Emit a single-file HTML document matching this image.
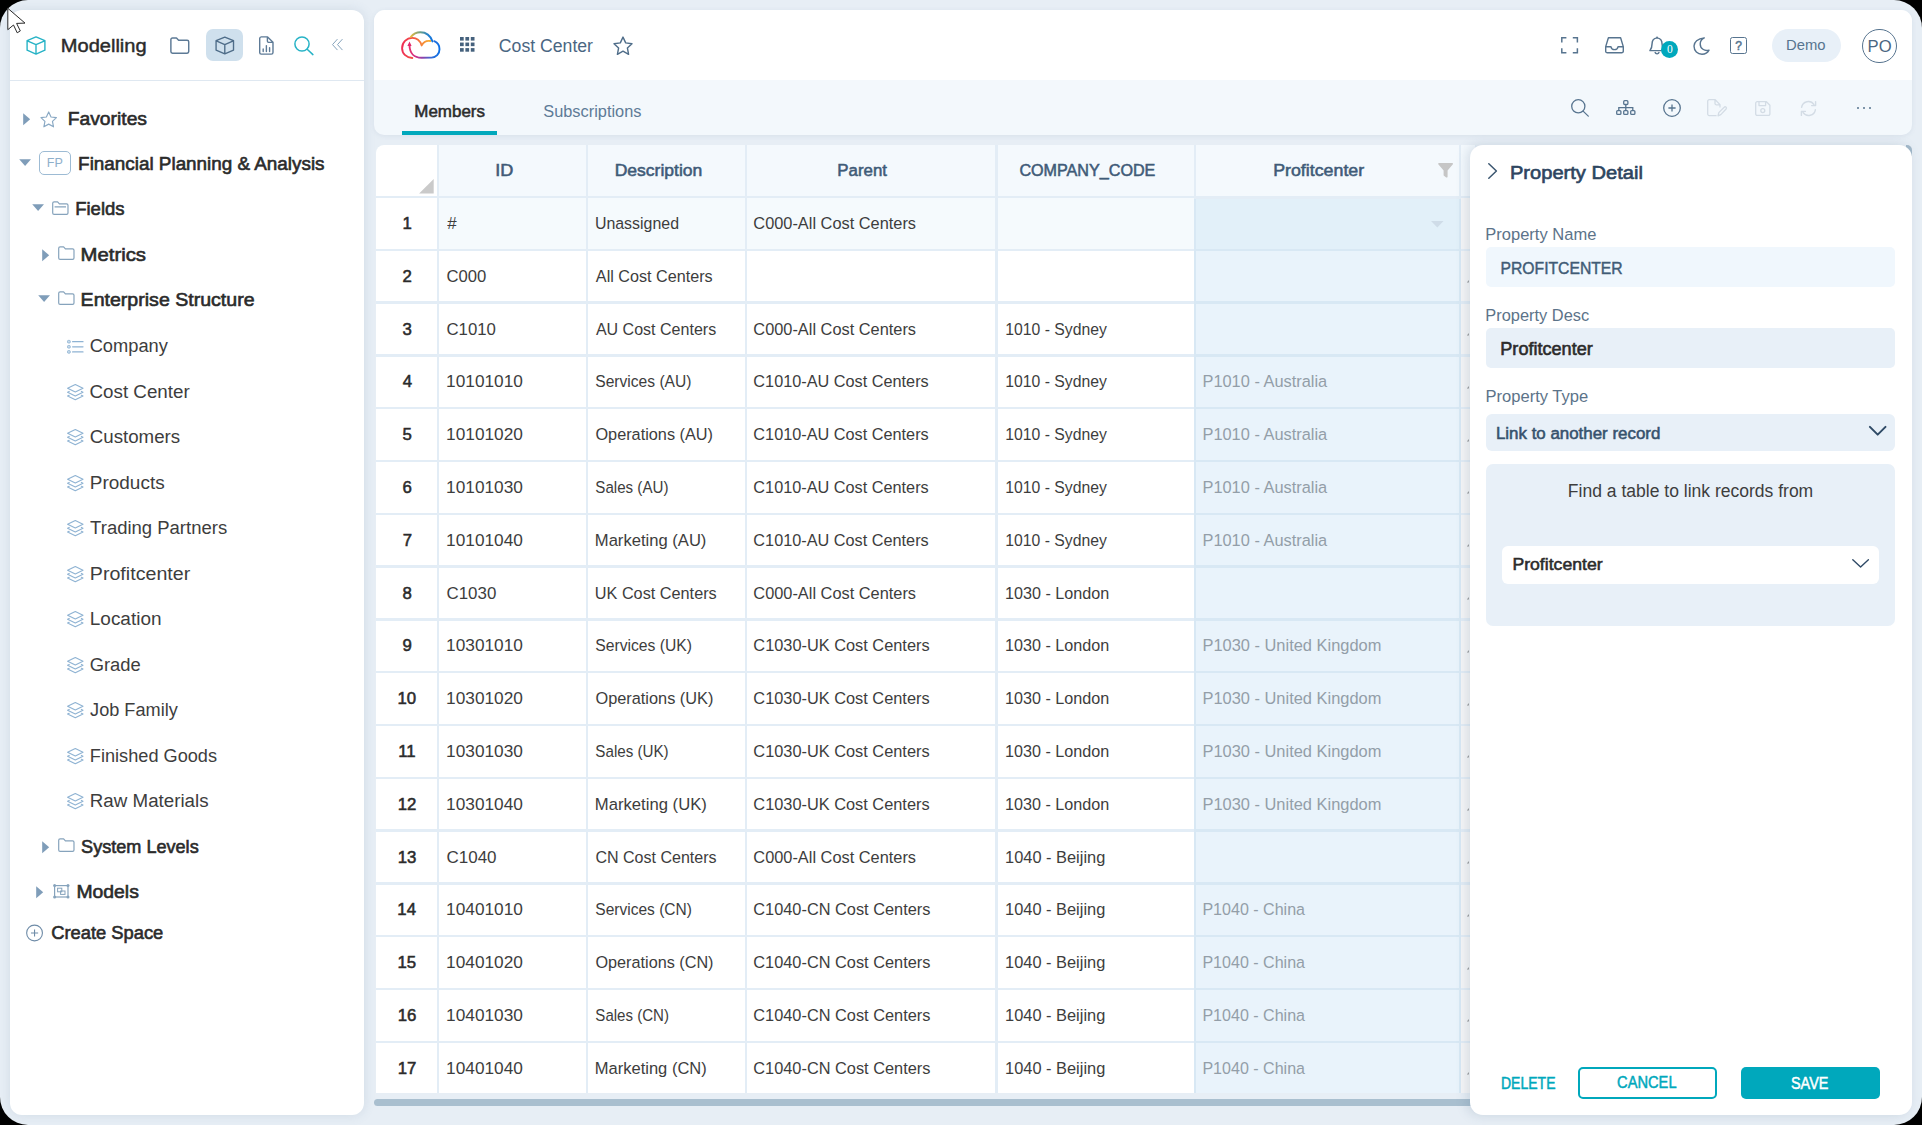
<!DOCTYPE html>
<html lang="en"><head><meta charset="utf-8"><title>Cost Center - Modelling</title>
<style>
html,body{margin:0;padding:0;}
body{width:1922px;height:1125px;overflow:hidden;background:#000;font-family:"Liberation Sans", sans-serif;position:relative;}
.b{position:absolute;box-sizing:border-box;}
.t{position:absolute;white-space:nowrap;line-height:24px;height:24px;transform-origin:0 50%;}
svg{overflow:visible;}
</style></head><body>
<div class="b" style="left:0;top:0;width:1922px;height:1125px;border-radius:28px;background:#e7eef5;overflow:hidden;">
<nav aria-label="Modelling"><div class="b" style="left:10px;top:10px;width:354px;height:1105px;background:#fff;border-radius:12px;box-shadow:0 0 12px rgba(90,120,150,.16);"></div>
<div class="b" style="left:10px;top:80px;width:354px;height:1px;background:#dfe8f1;"></div>
<svg class="b" style="left:26px;top:35.8px;" width="20" height="19" viewBox="0 0 20 19" fill="none"><path d="M10 .9 18.9 4.6V14.2L10 18.1 1.1 14.2V4.6Z M1.3 4.8 10 8.6 18.7 4.8 M10 8.6V18" stroke="#27b3c6" stroke-width="1.4" stroke-linejoin="round" stroke-linecap="round"/></svg>
<span class="t" id="t0" style="left:60px;padding-left:0.73px;top:33.87px;font-size:19.2px;font-weight:400;color:#2b2b2b;transform:scaleX(1.0460);-webkit-text-stroke:0.45px #2b2b2b;">Modelling</span>
<svg class="b" style="left:170.3px;top:36.6px;" width="19.6" height="17.2" viewBox="0 0 20 17.5" fill="none"><path d="M.9 2.6A1.6 1.6 0 0 1 2.5 1H6.6L8.8 3.3H17.5A1.6 1.6 0 0 1 19.1 4.9V14.9A1.6 1.6 0 0 1 17.5 16.5H2.5A1.6 1.6 0 0 1 .9 14.9Z" stroke="#5d7a96" stroke-width="1.5" stroke-linejoin="round"/></svg>
<div class="b" style="left:206px;top:29px;width:37px;height:32px;background:#cfe0ed;border-radius:7px;"></div>
<svg class="b" style="left:214.6px;top:35.7px;" width="19.6" height="19" viewBox="0 0 20 19" fill="none"><path d="M10 .9 18.9 4.6V14.2L10 18.1 1.1 14.2V4.6Z M1.3 4.8 10 8.6 18.7 4.8 M10 8.6V18" stroke="#4f6d89" stroke-width="1.4" stroke-linejoin="round" stroke-linecap="round"/></svg>
<svg class="b" style="left:258.7px;top:36px;" width="14.7" height="19" viewBox="0 0 14.7 19" fill="none"><path d="M2.3 .9H8.6L14 6.3V16.4A1.7 1.7 0 0 1 12.3 18.1H2.3A1.7 1.7 0 0 1 .7 16.4V2.6A1.7 1.7 0 0 1 2.3 .9Z M8.4 1.1V4.9A1.5 1.5 0 0 0 9.9 6.4H13.8" stroke="#5d7a96" stroke-width="1.4" stroke-linejoin="round"/><path d="M4.2 13V15.6 M7.4 9.6V15.6 M10.6 11.6V15.6" stroke="#5d7a96" stroke-width="1.4" stroke-linecap="round"/></svg>
<svg class="b" style="left:294.4px;top:36.1px;" width="19.6" height="19" viewBox="0 0 19.6 19" fill="none"><circle cx="8" cy="8" r="7.1" stroke="#27b3c6" stroke-width="1.5"/><path d="M13.2 13.2 18.9 18.6" stroke="#27b3c6" stroke-width="1.5" stroke-linecap="round"/></svg>
<svg class="b" style="left:331.8px;top:38.9px;" width="10.6" height="11.2" viewBox="0 0 10.6 11.2" fill="none"><path d="M5.2 .4 .5 5.6 5.2 10.8 M10.2 .4 5.5 5.6 10.2 10.8" stroke="#86a3bc" stroke-width="1" stroke-linecap="round" stroke-linejoin="round"/></svg>
<svg class="b" style="left:22.8px;top:113.19999999999999px;" width="7.4" height="12.4" viewBox="0 0 7.4 12.4" fill="none"><path d="M.2 .2 7.2 6.2 .2 12.2Z" fill="#7f9db9"/></svg>
<svg class="b" style="left:39.9px;top:110.5px;" width="17.4" height="16.8" viewBox="0 0 18 17.4" fill="none"><path d="M9 1 11.4 6.2 17 6.9 12.9 10.8 14 16.4 9 13.6 4 16.4 5.1 10.8 1 6.9 6.6 6.2Z" stroke="#8aa9c4" stroke-width="1.2" stroke-linejoin="round"/></svg>
<span class="t" id="t1" style="left:67px;padding-left:0.73px;top:107.00px;font-size:19.2px;font-weight:400;color:#2b2b2b;transform:scaleX(1.0049);-webkit-text-stroke:0.63px #2b2b2b;">Favorites</span>
<svg class="b" style="left:19.4px;top:159.4px;" width="12.2" height="7.2" viewBox="0 0 12.2 7.2" fill="none"><path d="M.2 .2H12L6.1 7Z" fill="#7f9db9"/></svg>
<div class="b" style="left:39px;top:150.5px;width:32px;height:24.8px;background:#fff;border:1.2px solid #9dbbd4;border-radius:5px;"></div>
<span class="t" id="t2" style="left:46px;padding-left:0.88px;top:151.08px;font-size:12.8px;font-weight:400;color:#8fb0cb;transform:scaleX(0.9819);">FP</span>
<span class="t" id="t3" style="left:78px;padding-left:0.13px;top:152.00px;font-size:19.2px;font-weight:400;color:#2b2b2b;transform:scaleX(0.9831);-webkit-text-stroke:0.63px #2b2b2b;">Financial Planning &amp; Analysis</span>
<svg class="b" style="left:31.8px;top:203.9px;" width="12.2" height="7.2" viewBox="0 0 12.2 7.2" fill="none"><path d="M.2 .2H12L6.1 7Z" fill="#7f9db9"/></svg>
<svg class="b" style="left:51.8px;top:200.5px;" width="16.7" height="14.2" viewBox="0 0 16.7 14.2" fill="none"><path d="M.7 2.2A1.4 1.4 0 0 1 2.1.8H5.6L7.4 2.9H14.6A1.4 1.4 0 0 1 16 4.3V12A1.4 1.4 0 0 1 14.6 13.4H2.1A1.4 1.4 0 0 1 .7 12Z" stroke="#86a3bc" stroke-width="1.2" stroke-linejoin="round"/><path d="M2.6 5.9H14" stroke="#86a3bc" stroke-width="1.1"/></svg>
<span class="t" id="t4" style="left:75px;padding-left:0.19px;top:197.00px;font-size:19.2px;font-weight:400;color:#2b2b2b;transform:scaleX(0.9640);-webkit-text-stroke:0.63px #2b2b2b;">Fields</span>
<svg class="b" style="left:41.8px;top:249.2px;" width="7.4" height="12.4" viewBox="0 0 7.4 12.4" fill="none"><path d="M.2 .2 7.2 6.2 .2 12.2Z" fill="#7f9db9"/></svg>
<svg class="b" style="left:57.7px;top:245.5px;" width="16.7" height="14.2" viewBox="0 0 16.7 14.2" fill="none"><path d="M.7 2.2A1.4 1.4 0 0 1 2.1.8H5.6L7.4 2.9H14.6A1.4 1.4 0 0 1 16 4.3V12A1.4 1.4 0 0 1 14.6 13.4H2.1A1.4 1.4 0 0 1 .7 12Z" stroke="#86a3bc" stroke-width="1.2" stroke-linejoin="round"/></svg>
<span class="t" id="t5" style="left:80px;padding-left:0.59px;top:243.00px;font-size:19.2px;font-weight:400;color:#2b2b2b;transform:scaleX(1.0577);-webkit-text-stroke:0.63px #2b2b2b;">Metrics</span>
<svg class="b" style="left:37.8px;top:295.1px;" width="12.2" height="7.2" viewBox="0 0 12.2 7.2" fill="none"><path d="M.2 .2H12L6.1 7Z" fill="#7f9db9"/></svg>
<svg class="b" style="left:57.7px;top:290.5px;" width="16.7" height="14.2" viewBox="0 0 16.7 14.2" fill="none"><path d="M.7 2.2A1.4 1.4 0 0 1 2.1.8H5.6L7.4 2.9H14.6A1.4 1.4 0 0 1 16 4.3V12A1.4 1.4 0 0 1 14.6 13.4H2.1A1.4 1.4 0 0 1 .7 12Z" stroke="#86a3bc" stroke-width="1.2" stroke-linejoin="round"/></svg>
<span class="t" id="t6" style="left:80px;padding-left:0.62px;top:288.00px;font-size:19.2px;font-weight:400;color:#2b2b2b;transform:scaleX(1.0193);-webkit-text-stroke:0.63px #2b2b2b;">Enterprise Structure</span>
<svg class="b" style="left:67px;top:339.5px;" width="16.6" height="13.6" viewBox="0 0 16.6 13.6" fill="none"><rect x=".5" y="0.3999999999999999" width="2.8" height="2.6" rx=".9" fill="#c9dcec" stroke="#8fb3d3" stroke-width=".9"/><path d="M5.6 1.7H16" stroke="#8fb3d3" stroke-width="1.25" stroke-linecap="round"/><rect x=".5" y="5.5" width="2.8" height="2.6" rx=".9" fill="#c9dcec" stroke="#8fb3d3" stroke-width=".9"/><path d="M5.6 6.8H16" stroke="#8fb3d3" stroke-width="1.25" stroke-linecap="round"/><rect x=".5" y="10.6" width="2.8" height="2.6" rx=".9" fill="#c9dcec" stroke="#8fb3d3" stroke-width=".9"/><path d="M5.6 11.9H16" stroke="#8fb3d3" stroke-width="1.25" stroke-linecap="round"/></svg>
<span class="t" id="t7" style="left:89px;padding-left:0.69px;top:334.00px;font-size:19.2px;font-weight:400;color:#3d3d3d;transform:scaleX(0.9520);">Company</span>
<svg class="b" style="left:66.8px;top:383.6px;" width="16.6" height="16.4" viewBox="0 0 16.6 16.4" fill="none"><path d="M8.3 .6 16 4.3 8.3 8 .6 4.3Z" stroke="#8fb3d3" stroke-width="1.15" stroke-linejoin="round"/><path d="M2.2 7.4 .6 8.2 8.3 11.9 16 8.2 14.4 7.4 M2.2 11.3 .6 12.1 8.3 15.8 16 12.1 14.4 11.3" stroke="#8fb3d3" stroke-width="1.15" stroke-linejoin="round" stroke-linecap="round"/></svg>
<span class="t" id="t8" style="left:89px;padding-left:0.59px;top:380.00px;font-size:19.2px;font-weight:400;color:#3d3d3d;transform:scaleX(0.9781);">Cost Center</span>
<svg class="b" style="left:66.8px;top:428.6px;" width="16.6" height="16.4" viewBox="0 0 16.6 16.4" fill="none"><path d="M8.3 .6 16 4.3 8.3 8 .6 4.3Z" stroke="#8fb3d3" stroke-width="1.15" stroke-linejoin="round"/><path d="M2.2 7.4 .6 8.2 8.3 11.9 16 8.2 14.4 7.4 M2.2 11.3 .6 12.1 8.3 15.8 16 12.1 14.4 11.3" stroke="#8fb3d3" stroke-width="1.15" stroke-linejoin="round" stroke-linecap="round"/></svg>
<span class="t" id="t9" style="left:89px;padding-left:0.78px;top:425.00px;font-size:19.2px;font-weight:400;color:#3d3d3d;transform:scaleX(0.9746);">Customers</span>
<svg class="b" style="left:66.8px;top:474.6px;" width="16.6" height="16.4" viewBox="0 0 16.6 16.4" fill="none"><path d="M8.3 .6 16 4.3 8.3 8 .6 4.3Z" stroke="#8fb3d3" stroke-width="1.15" stroke-linejoin="round"/><path d="M2.2 7.4 .6 8.2 8.3 11.9 16 8.2 14.4 7.4 M2.2 11.3 .6 12.1 8.3 15.8 16 12.1 14.4 11.3" stroke="#8fb3d3" stroke-width="1.15" stroke-linejoin="round" stroke-linecap="round"/></svg>
<span class="t" id="t10" style="left:89px;padding-left:0.80px;top:471.00px;font-size:19.2px;font-weight:400;color:#3d3d3d;transform:scaleX(0.9886);">Products</span>
<svg class="b" style="left:66.8px;top:519.6px;" width="16.6" height="16.4" viewBox="0 0 16.6 16.4" fill="none"><path d="M8.3 .6 16 4.3 8.3 8 .6 4.3Z" stroke="#8fb3d3" stroke-width="1.15" stroke-linejoin="round"/><path d="M2.2 7.4 .6 8.2 8.3 11.9 16 8.2 14.4 7.4 M2.2 11.3 .6 12.1 8.3 15.8 16 12.1 14.4 11.3" stroke="#8fb3d3" stroke-width="1.15" stroke-linejoin="round" stroke-linecap="round"/></svg>
<span class="t" id="t11" style="left:90px;padding-left:0.13px;top:516.00px;font-size:19.2px;font-weight:400;color:#3d3d3d;transform:scaleX(0.9635);">Trading Partners</span>
<svg class="b" style="left:66.8px;top:565.6px;" width="16.6" height="16.4" viewBox="0 0 16.6 16.4" fill="none"><path d="M8.3 .6 16 4.3 8.3 8 .6 4.3Z" stroke="#8fb3d3" stroke-width="1.15" stroke-linejoin="round"/><path d="M2.2 7.4 .6 8.2 8.3 11.9 16 8.2 14.4 7.4 M2.2 11.3 .6 12.1 8.3 15.8 16 12.1 14.4 11.3" stroke="#8fb3d3" stroke-width="1.15" stroke-linejoin="round" stroke-linecap="round"/></svg>
<span class="t" id="t12" style="left:89px;padding-left:0.77px;top:562.00px;font-size:19.2px;font-weight:400;color:#3d3d3d;transform:scaleX(1.0238);">Profitcenter</span>
<svg class="b" style="left:66.8px;top:610.6px;" width="16.6" height="16.4" viewBox="0 0 16.6 16.4" fill="none"><path d="M8.3 .6 16 4.3 8.3 8 .6 4.3Z" stroke="#8fb3d3" stroke-width="1.15" stroke-linejoin="round"/><path d="M2.2 7.4 .6 8.2 8.3 11.9 16 8.2 14.4 7.4 M2.2 11.3 .6 12.1 8.3 15.8 16 12.1 14.4 11.3" stroke="#8fb3d3" stroke-width="1.15" stroke-linejoin="round" stroke-linecap="round"/></svg>
<span class="t" id="t13" style="left:89px;padding-left:0.81px;top:607.00px;font-size:19.2px;font-weight:400;color:#3d3d3d;transform:scaleX(0.9887);">Location</span>
<svg class="b" style="left:66.8px;top:656.6px;" width="16.6" height="16.4" viewBox="0 0 16.6 16.4" fill="none"><path d="M8.3 .6 16 4.3 8.3 8 .6 4.3Z" stroke="#8fb3d3" stroke-width="1.15" stroke-linejoin="round"/><path d="M2.2 7.4 .6 8.2 8.3 11.9 16 8.2 14.4 7.4 M2.2 11.3 .6 12.1 8.3 15.8 16 12.1 14.4 11.3" stroke="#8fb3d3" stroke-width="1.15" stroke-linejoin="round" stroke-linecap="round"/></svg>
<span class="t" id="t14" style="left:89px;padding-left:0.67px;top:653.00px;font-size:19.2px;font-weight:400;color:#3d3d3d;transform:scaleX(0.9583);">Grade</span>
<svg class="b" style="left:66.8px;top:701.6px;" width="16.6" height="16.4" viewBox="0 0 16.6 16.4" fill="none"><path d="M8.3 .6 16 4.3 8.3 8 .6 4.3Z" stroke="#8fb3d3" stroke-width="1.15" stroke-linejoin="round"/><path d="M2.2 7.4 .6 8.2 8.3 11.9 16 8.2 14.4 7.4 M2.2 11.3 .6 12.1 8.3 15.8 16 12.1 14.4 11.3" stroke="#8fb3d3" stroke-width="1.15" stroke-linejoin="round" stroke-linecap="round"/></svg>
<span class="t" id="t15" style="left:90px;padding-left:0.09px;top:698.00px;font-size:19.2px;font-weight:400;color:#3d3d3d;transform:scaleX(0.9454);">Job Family</span>
<svg class="b" style="left:66.8px;top:747.6px;" width="16.6" height="16.4" viewBox="0 0 16.6 16.4" fill="none"><path d="M8.3 .6 16 4.3 8.3 8 .6 4.3Z" stroke="#8fb3d3" stroke-width="1.15" stroke-linejoin="round"/><path d="M2.2 7.4 .6 8.2 8.3 11.9 16 8.2 14.4 7.4 M2.2 11.3 .6 12.1 8.3 15.8 16 12.1 14.4 11.3" stroke="#8fb3d3" stroke-width="1.15" stroke-linejoin="round" stroke-linecap="round"/></svg>
<span class="t" id="t16" style="left:89px;padding-left:0.93px;top:744.00px;font-size:19.2px;font-weight:400;color:#3d3d3d;transform:scaleX(0.9461);">Finished Goods</span>
<svg class="b" style="left:66.8px;top:792.6px;" width="16.6" height="16.4" viewBox="0 0 16.6 16.4" fill="none"><path d="M8.3 .6 16 4.3 8.3 8 .6 4.3Z" stroke="#8fb3d3" stroke-width="1.15" stroke-linejoin="round"/><path d="M2.2 7.4 .6 8.2 8.3 11.9 16 8.2 14.4 7.4 M2.2 11.3 .6 12.1 8.3 15.8 16 12.1 14.4 11.3" stroke="#8fb3d3" stroke-width="1.15" stroke-linejoin="round" stroke-linecap="round"/></svg>
<span class="t" id="t17" style="left:89px;padding-left:0.87px;top:789.00px;font-size:19.2px;font-weight:400;color:#3d3d3d;transform:scaleX(0.9765);">Raw Materials</span>
<svg class="b" style="left:41.6px;top:841.2px;" width="7.4" height="12.4" viewBox="0 0 7.4 12.4" fill="none"><path d="M.2 .2 7.2 6.2 .2 12.2Z" fill="#7f9db9"/></svg>
<svg class="b" style="left:57.9px;top:837.9px;" width="16.7" height="14.2" viewBox="0 0 16.7 14.2" fill="none"><path d="M.7 2.2A1.4 1.4 0 0 1 2.1.8H5.6L7.4 2.9H14.6A1.4 1.4 0 0 1 16 4.3V12A1.4 1.4 0 0 1 14.6 13.4H2.1A1.4 1.4 0 0 1 .7 12Z" stroke="#86a3bc" stroke-width="1.2" stroke-linejoin="round"/></svg>
<span class="t" id="t18" style="left:81px;padding-left:0.10px;top:835.00px;font-size:19.2px;font-weight:400;color:#2b2b2b;transform:scaleX(0.9425);-webkit-text-stroke:0.63px #2b2b2b;">System Levels</span>
<svg class="b" style="left:35.5px;top:886.2px;" width="7.4" height="12.4" viewBox="0 0 7.4 12.4" fill="none"><path d="M.2 .2 7.2 6.2 .2 12.2Z" fill="#7f9db9"/></svg>
<svg class="b" style="left:52.6px;top:883.6px;" width="16.6" height="14.6" viewBox="0 0 16.6 14.6" fill="none"><rect x="1.6" y="1.6" width="13.4" height="11.4" stroke="#86a3bc" stroke-width="1.2"/><rect x="4.6" y="4.2" width="4.2" height="3.6" stroke="#86a3bc" stroke-width="1"/><rect x="7.6" y="7" width="4.4" height="3.4" stroke="#86a3bc" stroke-width="1"/><circle cx="1.6" cy="1.6" r="1.5" fill="#86a3bc"/><circle cx="15" cy="1.6" r="1.5" fill="#86a3bc"/><circle cx="1.6" cy="13" r="1.5" fill="#86a3bc"/><circle cx="15" cy="13" r="1.5" fill="#86a3bc"/></svg>
<span class="t" id="t19" style="left:76px;padding-left:0.44px;top:880.00px;font-size:19.2px;font-weight:400;color:#2b2b2b;transform:scaleX(1.0089);-webkit-text-stroke:0.63px #2b2b2b;">Models</span>
<svg class="b" style="left:26px;top:924.8px;" width="17.1" height="16" viewBox="0 0 17.1 16" fill="none"><circle cx="8.55" cy="8" r="7.9" stroke="#6f8ca8" stroke-width="1.1"/><path d="M8.55 4.4V11.6 M4.95 8H12.15" stroke="#6f8ca8" stroke-width="1.1"/></svg>
<span class="t" id="t20" style="left:51px;padding-left:0.15px;top:921.00px;font-size:19.2px;font-weight:400;color:#2b2b2b;transform:scaleX(0.9556);-webkit-text-stroke:0.63px #2b2b2b;">Create Space</span></nav>
<header><div class="b" style="left:374.2px;top:10px;width:1537.8px;height:125px;background:#f3f8fc;border-radius:11px 11px 10px 10px;box-shadow:0 1px 5px rgba(90,120,150,.10);overflow:hidden;"><div class="b" style="left:0px;top:0px;width:1538px;height:70px;background:#fff;"></div></div>
<svg class="b" style="left:401px;top:30px;" width="40" height="29" viewBox="0 0 40 29" fill="none"><defs><linearGradient id="lg1" gradientUnits="userSpaceOnUse" x1="1" y1="0" x2="30" y2="0"><stop offset="0" stop-color="#ee2f55"/><stop offset=".4" stop-color="#f4523f"/><stop offset=".68" stop-color="#f5853a"/><stop offset="1" stop-color="#f9b52e"/></linearGradient><linearGradient id="lg2" gradientUnits="userSpaceOnUse" x1="9" y1="0" x2="32" y2="0"><stop offset="0" stop-color="#f0bb35"/><stop offset=".45" stop-color="#6aa088"/><stop offset=".8" stop-color="#1f7fd0"/><stop offset="1" stop-color="#0f6fe0"/></linearGradient><linearGradient id="lg3" gradientUnits="userSpaceOnUse" x1="8" y1="0" x2="39" y2="0"><stop offset="0" stop-color="#e8306a"/><stop offset=".25" stop-color="#c6308c"/><stop offset=".5" stop-color="#7a4ab5"/><stop offset=".75" stop-color="#2f6fd8"/><stop offset="1" stop-color="#0b70e6"/></linearGradient></defs><path d="M11.3 28C5 27.5 1.1 23.5 1.1 18.2 1.1 12.5 5.5 8 11.3 7.9 16 7.9 19 10.5 20.7 15.4 22.5 12 25.5 10.4 29.4 11" stroke="url(#lg1)" stroke-width="1.9" stroke-linecap="round" stroke-linejoin="round"/><path d="M9.9 6.8C12.3 3.8 15.6 2.2 19.3 2.2 25 2.2 29.5 5.8 31.5 11.4" stroke="url(#lg2)" stroke-width="1.9" stroke-linecap="round"/><path d="M33.3 11.2C36.5 12.5 38.5 15.5 38.5 19.2 38.5 24 35 27.6 30.5 27.6L20.5 27.8C13.5 27.8 8.6 23.5 8.5 15" stroke="url(#lg3)" stroke-width="1.9" stroke-linecap="round"/><path d="M8.5 11.4 6.4 16H10.6Z" fill="#e32a6c"/></svg>
<svg class="b" style="left:460.1px;top:37.1px;" width="15" height="15" viewBox="0 0 15 15" fill="none"><rect x="0.00" y="0.00" width="3.7" height="3.6" fill="#45617d"/><rect x="5.40" y="0.00" width="3.7" height="3.6" fill="#45617d"/><rect x="10.80" y="0.00" width="3.7" height="3.6" fill="#45617d"/><rect x="0.00" y="5.55" width="3.7" height="3.6" fill="#45617d"/><rect x="5.40" y="5.55" width="3.7" height="3.6" fill="#45617d"/><rect x="10.80" y="5.55" width="3.7" height="3.6" fill="#45617d"/><rect x="0.00" y="11.10" width="3.7" height="3.6" fill="#45617d"/><rect x="5.40" y="11.10" width="3.7" height="3.6" fill="#45617d"/><rect x="10.80" y="11.10" width="3.7" height="3.6" fill="#45617d"/></svg>
<span class="t" id="t21" style="left:498px;padding-left:0.92px;top:34.47px;font-size:19.2px;font-weight:400;color:#4a6682;transform:scaleX(0.9196);">Cost Center</span>
<svg class="b" style="left:613px;top:35.6px;" width="20" height="19.4" viewBox="0 0 20 19.4" fill="none"><path d="M10 1.1 12.7 6.9 19 7.7 14.4 12 15.6 18.3 10 15.2 4.4 18.3 5.6 12 1 7.7 7.3 6.9Z" stroke="#4f6d89" stroke-width="1.4" stroke-linejoin="round"/></svg>
<svg class="b" style="left:1560.6px;top:37.2px;" width="17.2" height="16.6" viewBox="0 0 17.2 16.6" fill="none"><path d="M.8 5.4V.8H5.4 M11.8 .8H16.4V5.4 M16.4 11.2V15.8H11.8 M5.4 15.8H.8V11.2" stroke="#57748f" stroke-width="1.5" stroke-linejoin="miter"/></svg>
<svg class="b" style="left:1605px;top:37.1px;" width="19" height="16.6" viewBox="0 0 19 16.6" fill="none"><path d="M3.4 .8H15.6L18.3 9.6V14.2A1.6 1.6 0 0 1 16.7 15.8H2.3A1.6 1.6 0 0 1 .7 14.2V9.6Z M.9 9.8H6C6.4 12 8 12.6 9.5 12.6S12.6 12 13 9.8H18.1" stroke="#57748f" stroke-width="1.4" stroke-linejoin="round"/></svg>
<svg class="b" style="left:1648.6px;top:35.9px;transform:scaleX(1.06);transform-origin:0 0;" width="15.2" height="19" viewBox="0 0 15.2 19" fill="none"><path d="M7.6 1.9C4.4 2.4 2.9 5 2.9 7.8 2.9 11.4 1.9 13.2 .9 14.6H14.3C13.3 13.2 12.3 11.4 12.3 7.8 12.3 5 10.8 2.4 7.6 1.9Z" stroke="#57748f" stroke-width="1.4" stroke-linejoin="round"/><circle cx="7.6" cy="1.3" r=".9" fill="#57748f"/><path d="M5.8 16.6A1.9 1.9 0 0 0 9.4 16.6" stroke="#57748f" stroke-width="1.4" stroke-linecap="round"/></svg>
<div class="b" style="left:1661.4px;top:40.7px;width:17px;height:17px;background:#00a8bc;border-radius:50%;"></div>
<span class="t" id="t22" style="left:1667px;padding-left:0.03px;top:37.42px;font-size:11.5px;font-weight:400;color:#fff;font-family:'Liberation Serif',serif;">0</span>
<svg class="b" style="left:1693px;top:36.5px;" width="17" height="18" viewBox="0 0 17 18" fill="none"><path d="M11.3 .9C4.6 1.5 1 5.2 1 9.1 1 13.9 4.6 17.2 9 17.2 12.2 17.2 14.8 15.5 16 13.1 11.6 14.5 7.2 11.5 7.2 6.9 7.2 4.1 8.8 2.1 11.3 .9Z" stroke="#57748f" stroke-width="1.4" stroke-linejoin="round"/></svg>
<div class="b" style="left:1730.2px;top:37.3px;width:16.8px;height:16.4px;border:1.5px solid #57748f;border-radius:2.5px;"></div>
<span class="t" id="t23" style="left:1735px;padding-left:0.35px;top:33.90px;font-size:12px;font-weight:400;color:#57748f;-webkit-text-stroke:0.5px #57748f;">?</span>
<div class="b" style="left:1772px;top:29px;width:69px;height:33px;background:#e8f0f8;border-radius:17px;"></div>
<span class="t" id="t24" style="left:1786px;padding-left:0.06px;top:33.46px;font-size:14.4px;font-weight:400;color:#57748f;transform:scaleX(1.0301);">Demo</span>
<div class="b" style="left:1862px;top:28.5px;width:34.5px;height:34.5px;background:#fff;border:1.2px solid #57748f;border-radius:50%;"></div>
<span class="t" id="t25" style="left:1867px;padding-left:0.59px;top:33.77px;font-size:16.4px;font-weight:400;color:#4a6682;transform:scaleX(1.0144);">PO</span>
<span class="t" id="t26" style="left:414px;padding-left:0.30px;top:99.58px;font-size:15.6px;font-weight:400;color:#2b2b2b;transform:scaleX(1.0870);-webkit-text-stroke:0.5px #2b2b2b;">Members</span>
<span class="t" id="t27" style="left:543px;padding-left:0.22px;top:99.58px;font-size:15.6px;font-weight:400;color:#5e7b97;transform:scaleX(1.0491);">Subscriptions</span>
<div class="b" style="left:402px;top:131px;width:95px;height:4px;background:#00a8bc;"></div>
<svg class="b" style="left:1571.4px;top:99px;" width="18" height="17.8" viewBox="0 0 18 17.8" fill="none"><circle cx="7.3" cy="7.3" r="6.6" stroke="#57748f" stroke-width="1.3"/><path d="M12.1 12.1 17.3 17.1" stroke="#57748f" stroke-width="1.3" stroke-linecap="round"/></svg>
<svg class="b" style="left:1616px;top:100px;" width="19.6" height="15.2" viewBox="0 0 19.6 15.2" fill="none"><rect x="7.7" y=".7" width="4.2" height="3.8" rx="1" stroke="#57748f" stroke-width="1.3"/><rect x=".7" y="10.6" width="4.2" height="3.8" rx="1" stroke="#57748f" stroke-width="1.3"/><rect x="7.7" y="10.6" width="4.2" height="3.8" rx="1" stroke="#57748f" stroke-width="1.3"/><rect x="14.7" y="10.6" width="4.2" height="3.8" rx="1" stroke="#57748f" stroke-width="1.3"/><path d="M9.8 4.6V10.4 M2.8 10.4V7.6H16.8V10.4" stroke="#57748f" stroke-width="1.3"/></svg>
<svg class="b" style="left:1662.5px;top:98.9px;" width="18" height="18" viewBox="0 0 18 18" fill="none"><circle cx="9" cy="9" r="8.3" stroke="#57748f" stroke-width="1.3"/><path d="M9 5.4V12.6 M5.4 9H12.6" stroke="#57748f" stroke-width="1.3"/></svg>
<svg class="b" style="left:1707px;top:99px;" width="20" height="17.6" viewBox="0 0 20 17.6" fill="none"><path d="M9.6 16.6H2.2A1.5 1.5 0 0 1 .7 15.1V2.2A1.5 1.5 0 0 1 2.2 .7H8.2L13 5.6V8.6 M8 .9V4.4A1.4 1.4 0 0 0 9.4 5.8H12.8" stroke="#d3dce5" stroke-width="1.3" stroke-linejoin="round"/><path d="M11 16.8 11.8 13.6 17.2 8.2A1.3 1.3 0 0 1 19.1 10L13.8 15.6Z" stroke="#d3dce5" stroke-width="1.3" stroke-linejoin="round"/></svg>
<svg class="b" style="left:1755px;top:100.8px;" width="15.6" height="15.1" viewBox="0 0 15.6 15.1" fill="none"><path d="M2.2 .7H11.4L14.9 4.2V12.9A1.5 1.5 0 0 1 13.4 14.4H2.2A1.5 1.5 0 0 1 .7 12.9V2.2A1.5 1.5 0 0 1 2.2 .7Z M4 .9V4.6H10.6V.9" stroke="#d3dce5" stroke-width="1.3" stroke-linejoin="round"/><circle cx="7.8" cy="9.6" r="2" stroke="#d3dce5" stroke-width="1.3"/></svg>
<svg class="b" style="left:1800px;top:100.5px;" width="17" height="15" viewBox="0 0 17 15" fill="none"><path d="M1.6 6.4A6.8 6.8 0 0 1 14 3.6 M15.4 8.6A6.8 6.8 0 0 1 3 11.4" stroke="#d3dce5" stroke-width="1.4" stroke-linecap="round"/><path d="M15.6 .6V4.6H11.6 M1.4 14.4V10.4H5.4" stroke="#d3dce5" stroke-width="1.4" stroke-linecap="round" stroke-linejoin="round"/></svg>
<div class="b" style="left:1857.0px;top:106.9px;width:2.2px;height:2.2px;background:#57748f;border-radius:50%;"></div>
<div class="b" style="left:1862.9px;top:106.9px;width:2.2px;height:2.2px;background:#57748f;border-radius:50%;"></div>
<div class="b" style="left:1868.8px;top:106.9px;width:2.2px;height:2.2px;background:#57748f;border-radius:50%;"></div></header>
<main><div class="b" style="left:376px;top:145px;width:1100px;height:948.4000000000001px;background:#e3edf6;border-top-left-radius:8px;overflow:hidden;"><div class="b" style="left:0px;top:0px;width:61px;height:50.8px;background:#fff;"></div>
<div class="b" style="left:63px;top:0px;width:147px;height:50.8px;background:#f4f9fd;"></div>
<div class="b" style="left:212px;top:0px;width:157px;height:50.8px;background:#f4f9fd;"></div>
<div class="b" style="left:371px;top:0px;width:248.4px;height:50.8px;background:#f4f9fd;"></div>
<div class="b" style="left:621.5px;top:0px;width:196.0px;height:50.8px;background:#f4f9fd;"></div>
<div class="b" style="left:819.5px;top:0px;width:263.5px;height:50.8px;background:#f4f9fd;"></div>
<div class="b" style="left:1085px;top:0px;width:14px;height:50.8px;background:#f4f9fd;"></div>
<div class="b" style="left:817.7px;top:53.6px;width:267.2px;height:894.8px;background:#d8e8f4;"></div>
<div class="b" style="left:0px;top:53.1px;width:61px;height:50.5px;background:#fff;"></div>
<div class="b" style="left:63px;top:53.1px;width:147px;height:50.5px;background:#f5fafd;"></div>
<div class="b" style="left:212px;top:53.1px;width:157px;height:50.5px;background:#f5fafd;"></div>
<div class="b" style="left:371px;top:53.1px;width:248.4px;height:50.5px;background:#f5fafd;"></div>
<div class="b" style="left:621.5px;top:53.1px;width:196.0px;height:50.5px;background:#f5fafd;"></div>
<div class="b" style="left:819.5px;top:53.9px;width:263.5px;height:49.7px;background:#e2f0f9;"></div>
<div class="b" style="left:1085px;top:53.1px;width:14px;height:50.5px;background:#f6f6f7;"></div>
<div class="b" style="left:0px;top:105.9px;width:61px;height:50.5px;background:#fff;"></div>
<div class="b" style="left:63px;top:105.9px;width:147px;height:50.5px;background:#fff;"></div>
<div class="b" style="left:212px;top:105.9px;width:157px;height:50.5px;background:#fff;"></div>
<div class="b" style="left:371px;top:105.9px;width:248.4px;height:50.5px;background:#fff;"></div>
<div class="b" style="left:621.5px;top:105.9px;width:196.0px;height:50.5px;background:#fff;"></div>
<div class="b" style="left:819.5px;top:105.9px;width:263.5px;height:50.5px;background:#e9f3fb;"></div>
<div class="b" style="left:1085px;top:105.9px;width:14px;height:50.5px;background:#f6f6f7;"></div>
<div class="b" style="left:0px;top:158.7px;width:61px;height:50.5px;background:#fff;"></div>
<div class="b" style="left:63px;top:158.7px;width:147px;height:50.5px;background:#fff;"></div>
<div class="b" style="left:212px;top:158.7px;width:157px;height:50.5px;background:#fff;"></div>
<div class="b" style="left:371px;top:158.7px;width:248.4px;height:50.5px;background:#fff;"></div>
<div class="b" style="left:621.5px;top:158.7px;width:196.0px;height:50.5px;background:#fff;"></div>
<div class="b" style="left:819.5px;top:158.7px;width:263.5px;height:50.5px;background:#e9f3fb;"></div>
<div class="b" style="left:1085px;top:158.7px;width:14px;height:50.5px;background:#f6f6f7;"></div>
<div class="b" style="left:0px;top:211.5px;width:61px;height:50.5px;background:#fff;"></div>
<div class="b" style="left:63px;top:211.5px;width:147px;height:50.5px;background:#fff;"></div>
<div class="b" style="left:212px;top:211.5px;width:157px;height:50.5px;background:#fff;"></div>
<div class="b" style="left:371px;top:211.5px;width:248.4px;height:50.5px;background:#fff;"></div>
<div class="b" style="left:621.5px;top:211.5px;width:196.0px;height:50.5px;background:#fff;"></div>
<div class="b" style="left:819.5px;top:211.5px;width:263.5px;height:50.5px;background:#e9f3fb;"></div>
<div class="b" style="left:1085px;top:211.5px;width:14px;height:50.5px;background:#f6f6f7;"></div>
<div class="b" style="left:0px;top:264.3px;width:61px;height:50.5px;background:#fff;"></div>
<div class="b" style="left:63px;top:264.3px;width:147px;height:50.5px;background:#fff;"></div>
<div class="b" style="left:212px;top:264.3px;width:157px;height:50.5px;background:#fff;"></div>
<div class="b" style="left:371px;top:264.3px;width:248.4px;height:50.5px;background:#fff;"></div>
<div class="b" style="left:621.5px;top:264.3px;width:196.0px;height:50.5px;background:#fff;"></div>
<div class="b" style="left:819.5px;top:264.3px;width:263.5px;height:50.5px;background:#e9f3fb;"></div>
<div class="b" style="left:1085px;top:264.3px;width:14px;height:50.5px;background:#f6f6f7;"></div>
<div class="b" style="left:0px;top:317.1px;width:61px;height:50.5px;background:#fff;"></div>
<div class="b" style="left:63px;top:317.1px;width:147px;height:50.5px;background:#fff;"></div>
<div class="b" style="left:212px;top:317.1px;width:157px;height:50.5px;background:#fff;"></div>
<div class="b" style="left:371px;top:317.1px;width:248.4px;height:50.5px;background:#fff;"></div>
<div class="b" style="left:621.5px;top:317.1px;width:196.0px;height:50.5px;background:#fff;"></div>
<div class="b" style="left:819.5px;top:317.1px;width:263.5px;height:50.5px;background:#e9f3fb;"></div>
<div class="b" style="left:1085px;top:317.1px;width:14px;height:50.5px;background:#f6f6f7;"></div>
<div class="b" style="left:0px;top:369.9px;width:61px;height:50.5px;background:#fff;"></div>
<div class="b" style="left:63px;top:369.9px;width:147px;height:50.5px;background:#fff;"></div>
<div class="b" style="left:212px;top:369.9px;width:157px;height:50.5px;background:#fff;"></div>
<div class="b" style="left:371px;top:369.9px;width:248.4px;height:50.5px;background:#fff;"></div>
<div class="b" style="left:621.5px;top:369.9px;width:196.0px;height:50.5px;background:#fff;"></div>
<div class="b" style="left:819.5px;top:369.9px;width:263.5px;height:50.5px;background:#e9f3fb;"></div>
<div class="b" style="left:1085px;top:369.9px;width:14px;height:50.5px;background:#f6f6f7;"></div>
<div class="b" style="left:0px;top:422.7px;width:61px;height:50.5px;background:#fff;"></div>
<div class="b" style="left:63px;top:422.7px;width:147px;height:50.5px;background:#fff;"></div>
<div class="b" style="left:212px;top:422.7px;width:157px;height:50.5px;background:#fff;"></div>
<div class="b" style="left:371px;top:422.7px;width:248.4px;height:50.5px;background:#fff;"></div>
<div class="b" style="left:621.5px;top:422.7px;width:196.0px;height:50.5px;background:#fff;"></div>
<div class="b" style="left:819.5px;top:422.7px;width:263.5px;height:50.5px;background:#e9f3fb;"></div>
<div class="b" style="left:1085px;top:422.7px;width:14px;height:50.5px;background:#f6f6f7;"></div>
<div class="b" style="left:0px;top:475.5px;width:61px;height:50.5px;background:#fff;"></div>
<div class="b" style="left:63px;top:475.5px;width:147px;height:50.5px;background:#fff;"></div>
<div class="b" style="left:212px;top:475.5px;width:157px;height:50.5px;background:#fff;"></div>
<div class="b" style="left:371px;top:475.5px;width:248.4px;height:50.5px;background:#fff;"></div>
<div class="b" style="left:621.5px;top:475.5px;width:196.0px;height:50.5px;background:#fff;"></div>
<div class="b" style="left:819.5px;top:475.5px;width:263.5px;height:50.5px;background:#e9f3fb;"></div>
<div class="b" style="left:1085px;top:475.5px;width:14px;height:50.5px;background:#f6f6f7;"></div>
<div class="b" style="left:0px;top:528.3px;width:61px;height:50.5px;background:#fff;"></div>
<div class="b" style="left:63px;top:528.3px;width:147px;height:50.5px;background:#fff;"></div>
<div class="b" style="left:212px;top:528.3px;width:157px;height:50.5px;background:#fff;"></div>
<div class="b" style="left:371px;top:528.3px;width:248.4px;height:50.5px;background:#fff;"></div>
<div class="b" style="left:621.5px;top:528.3px;width:196.0px;height:50.5px;background:#fff;"></div>
<div class="b" style="left:819.5px;top:528.3px;width:263.5px;height:50.5px;background:#e9f3fb;"></div>
<div class="b" style="left:1085px;top:528.3px;width:14px;height:50.5px;background:#f6f6f7;"></div>
<div class="b" style="left:0px;top:581.1px;width:61px;height:50.5px;background:#fff;"></div>
<div class="b" style="left:63px;top:581.1px;width:147px;height:50.5px;background:#fff;"></div>
<div class="b" style="left:212px;top:581.1px;width:157px;height:50.5px;background:#fff;"></div>
<div class="b" style="left:371px;top:581.1px;width:248.4px;height:50.5px;background:#fff;"></div>
<div class="b" style="left:621.5px;top:581.1px;width:196.0px;height:50.5px;background:#fff;"></div>
<div class="b" style="left:819.5px;top:581.1px;width:263.5px;height:50.5px;background:#e9f3fb;"></div>
<div class="b" style="left:1085px;top:581.1px;width:14px;height:50.5px;background:#f6f6f7;"></div>
<div class="b" style="left:0px;top:633.9px;width:61px;height:50.5px;background:#fff;"></div>
<div class="b" style="left:63px;top:633.9px;width:147px;height:50.5px;background:#fff;"></div>
<div class="b" style="left:212px;top:633.9px;width:157px;height:50.5px;background:#fff;"></div>
<div class="b" style="left:371px;top:633.9px;width:248.4px;height:50.5px;background:#fff;"></div>
<div class="b" style="left:621.5px;top:633.9px;width:196.0px;height:50.5px;background:#fff;"></div>
<div class="b" style="left:819.5px;top:633.9px;width:263.5px;height:50.5px;background:#e9f3fb;"></div>
<div class="b" style="left:1085px;top:633.9px;width:14px;height:50.5px;background:#f6f6f7;"></div>
<div class="b" style="left:0px;top:686.7px;width:61px;height:50.5px;background:#fff;"></div>
<div class="b" style="left:63px;top:686.7px;width:147px;height:50.5px;background:#fff;"></div>
<div class="b" style="left:212px;top:686.7px;width:157px;height:50.5px;background:#fff;"></div>
<div class="b" style="left:371px;top:686.7px;width:248.4px;height:50.5px;background:#fff;"></div>
<div class="b" style="left:621.5px;top:686.7px;width:196.0px;height:50.5px;background:#fff;"></div>
<div class="b" style="left:819.5px;top:686.7px;width:263.5px;height:50.5px;background:#e9f3fb;"></div>
<div class="b" style="left:1085px;top:686.7px;width:14px;height:50.5px;background:#f6f6f7;"></div>
<div class="b" style="left:0px;top:739.5px;width:61px;height:50.5px;background:#fff;"></div>
<div class="b" style="left:63px;top:739.5px;width:147px;height:50.5px;background:#fff;"></div>
<div class="b" style="left:212px;top:739.5px;width:157px;height:50.5px;background:#fff;"></div>
<div class="b" style="left:371px;top:739.5px;width:248.4px;height:50.5px;background:#fff;"></div>
<div class="b" style="left:621.5px;top:739.5px;width:196.0px;height:50.5px;background:#fff;"></div>
<div class="b" style="left:819.5px;top:739.5px;width:263.5px;height:50.5px;background:#e9f3fb;"></div>
<div class="b" style="left:1085px;top:739.5px;width:14px;height:50.5px;background:#f6f6f7;"></div>
<div class="b" style="left:0px;top:792.3px;width:61px;height:50.5px;background:#fff;"></div>
<div class="b" style="left:63px;top:792.3px;width:147px;height:50.5px;background:#fff;"></div>
<div class="b" style="left:212px;top:792.3px;width:157px;height:50.5px;background:#fff;"></div>
<div class="b" style="left:371px;top:792.3px;width:248.4px;height:50.5px;background:#fff;"></div>
<div class="b" style="left:621.5px;top:792.3px;width:196.0px;height:50.5px;background:#fff;"></div>
<div class="b" style="left:819.5px;top:792.3px;width:263.5px;height:50.5px;background:#e9f3fb;"></div>
<div class="b" style="left:1085px;top:792.3px;width:14px;height:50.5px;background:#f6f6f7;"></div>
<div class="b" style="left:0px;top:845.1px;width:61px;height:50.5px;background:#fff;"></div>
<div class="b" style="left:63px;top:845.1px;width:147px;height:50.5px;background:#fff;"></div>
<div class="b" style="left:212px;top:845.1px;width:157px;height:50.5px;background:#fff;"></div>
<div class="b" style="left:371px;top:845.1px;width:248.4px;height:50.5px;background:#fff;"></div>
<div class="b" style="left:621.5px;top:845.1px;width:196.0px;height:50.5px;background:#fff;"></div>
<div class="b" style="left:819.5px;top:845.1px;width:263.5px;height:50.5px;background:#e9f3fb;"></div>
<div class="b" style="left:1085px;top:845.1px;width:14px;height:50.5px;background:#f6f6f7;"></div>
<div class="b" style="left:0px;top:897.9px;width:61px;height:50.5px;background:#fff;"></div>
<div class="b" style="left:63px;top:897.9px;width:147px;height:50.5px;background:#fff;"></div>
<div class="b" style="left:212px;top:897.9px;width:157px;height:50.5px;background:#fff;"></div>
<div class="b" style="left:371px;top:897.9px;width:248.4px;height:50.5px;background:#fff;"></div>
<div class="b" style="left:621.5px;top:897.9px;width:196.0px;height:50.5px;background:#fff;"></div>
<div class="b" style="left:819.5px;top:897.9px;width:263.5px;height:50.5px;background:#e9f3fb;"></div>
<div class="b" style="left:1085px;top:897.9px;width:14px;height:50.5px;background:#f6f6f7;"></div>
<svg class="b" style="left:43.19999999999999px;top:34.19999999999999px;" width="14.8" height="14.6" viewBox="0 0 15 15" fill="none"><path d="M15 0V15H0Z" fill="#cacaca"/></svg></div>
<span class="t" id="t28" style="left:495px;padding-left:0.21px;top:159.11px;font-size:16.8px;font-weight:400;color:#3f5b78;transform:scaleX(1.0794);-webkit-text-stroke:0.55px #3f5b78;">ID</span>
<span class="t" id="t29" style="left:614px;padding-left:0.63px;top:159.11px;font-size:16.8px;font-weight:400;color:#3f5b78;transform:scaleX(1.0437);-webkit-text-stroke:0.55px #3f5b78;">Description</span>
<span class="t" id="t30" style="left:837px;padding-left:0.33px;top:159.11px;font-size:16.8px;font-weight:400;color:#3f5b78;transform:scaleX(1.0036);-webkit-text-stroke:0.55px #3f5b78;">Parent</span>
<span class="t" id="t31" style="left:1019px;padding-left:0.40px;top:159.11px;font-size:16.8px;font-weight:400;color:#3f5b78;transform:scaleX(0.9617);-webkit-text-stroke:0.55px #3f5b78;">COMPANY_CODE</span>
<span class="t" id="t32" style="left:1273px;padding-left:0.16px;top:159.11px;font-size:16.8px;font-weight:400;color:#3f5b78;transform:scaleX(1.0608);-webkit-text-stroke:0.55px #3f5b78;">Profitcenter</span>
<svg class="b" style="left:1438.2px;top:163px;" width="15.2" height="14.8" viewBox="0 0 15.2 14.8" fill="none"><path d="M.9 0H14.3A.8 .8 0 0 1 14.9 1.3L9.6 7.6V13.6A.9 .9 0 0 1 8.2 14.4L6 12.8A.9 .9 0 0 1 5.6 12V7.6L.3 1.3A.8 .8 0 0 1 .9 0Z" fill="#c6c6c6"/></svg>
<svg class="b" style="left:1430.6px;top:220.9px;" width="12.6" height="6.4" viewBox="0 0 12.6 6.4" fill="none"><path d="M0 0H12.6L6.3 6.4Z" fill="#cfdce8"/></svg>
<span class="t" id="t33" style="left:402px;padding-left:0.38px;top:211.91px;font-size:16.8px;font-weight:400;color:#2b2b2b;-webkit-text-stroke:0.55px #2b2b2b;">1</span>
<span class="t" id="t34" style="left:447px;padding-left:0.20px;top:211.91px;font-size:16.8px;font-weight:400;color:#3d3d3d;transform:scaleX(1.0064);">#</span>
<span class="t" id="t35" style="left:594px;padding-left:0.93px;top:211.91px;font-size:16.8px;font-weight:400;color:#3d3d3d;transform:scaleX(0.9492);">Unassigned</span>
<span class="t" id="t36" style="left:753px;padding-left:0.34px;top:211.91px;font-size:16.8px;font-weight:400;color:#3d3d3d;transform:scaleX(0.9746);">C000-All Cost Centers</span>
<span class="t" id="t37" style="left:402px;padding-left:0.48px;top:264.71px;font-size:16.8px;font-weight:400;color:#2b2b2b;-webkit-text-stroke:0.55px #2b2b2b;">2</span>
<span class="t" id="t38" style="left:446px;padding-left:0.52px;top:264.71px;font-size:16.8px;font-weight:400;color:#3d3d3d;transform:scaleX(0.9927);">C000</span>
<span class="t" id="t39" style="left:595px;padding-left:0.92px;top:264.71px;font-size:16.8px;font-weight:400;color:#3d3d3d;transform:scaleX(0.9632);">All Cost Centers</span>
<svg class="b" style="left:1467.4px;top:280.09999999999997px;" width="1.8" height="2.4" viewBox="0 0 2 3" fill="none"><path d="M0 3 2 0V3Z" fill="#777"/></svg>
<span class="t" id="t40" style="left:402px;padding-left:0.55px;top:317.51px;font-size:16.8px;font-weight:400;color:#2b2b2b;-webkit-text-stroke:0.55px #2b2b2b;">3</span>
<span class="t" id="t41" style="left:446px;padding-left:0.51px;top:317.51px;font-size:16.8px;font-weight:400;color:#3d3d3d;">C1010</span>
<span class="t" id="t42" style="left:595px;padding-left:0.93px;top:317.51px;font-size:16.8px;font-weight:400;color:#3d3d3d;transform:scaleX(0.9553);">AU Cost Centers</span>
<span class="t" id="t43" style="left:753px;padding-left:0.34px;top:317.51px;font-size:16.8px;font-weight:400;color:#3d3d3d;transform:scaleX(0.9746);">C000-All Cost Centers</span>
<span class="t" id="t44" style="left:1005px;padding-left:0.19px;top:317.51px;font-size:16.8px;font-weight:400;color:#3d3d3d;transform:scaleX(0.9394);">1010 - Sydney</span>
<svg class="b" style="left:1467.4px;top:332.9px;" width="1.8" height="2.4" viewBox="0 0 2 3" fill="none"><path d="M0 3 2 0V3Z" fill="#777"/></svg>
<span class="t" id="t45" style="left:402px;padding-left:0.64px;top:370.31px;font-size:16.8px;font-weight:400;color:#2b2b2b;-webkit-text-stroke:0.55px #2b2b2b;">4</span>
<span class="t" id="t46" style="left:446px;padding-left:0.11px;top:370.31px;font-size:16.8px;font-weight:400;color:#3d3d3d;transform:scaleX(1.0288);">10101010</span>
<span class="t" id="t47" style="left:595px;padding-left:0.29px;top:370.31px;font-size:16.8px;font-weight:400;color:#3d3d3d;transform:scaleX(0.9297);">Services (AU)</span>
<span class="t" id="t48" style="left:753px;padding-left:0.38px;top:370.31px;font-size:16.8px;font-weight:400;color:#3d3d3d;transform:scaleX(0.9691);">C1010-AU Cost Centers</span>
<span class="t" id="t49" style="left:1005px;padding-left:0.19px;top:370.31px;font-size:16.8px;font-weight:400;color:#3d3d3d;transform:scaleX(0.9394);">1010 - Sydney</span>
<span class="t" id="t50" style="left:1202px;padding-left:0.48px;top:370.31px;font-size:16.8px;font-weight:400;color:#939ea8;transform:scaleX(0.9763);">P1010 - Australia</span>
<svg class="b" style="left:1467.4px;top:385.69999999999993px;" width="1.8" height="2.4" viewBox="0 0 2 3" fill="none"><path d="M0 3 2 0V3Z" fill="#777"/></svg>
<span class="t" id="t51" style="left:402px;padding-left:0.49px;top:423.11px;font-size:16.8px;font-weight:400;color:#2b2b2b;-webkit-text-stroke:0.55px #2b2b2b;">5</span>
<span class="t" id="t52" style="left:446px;padding-left:0.11px;top:423.11px;font-size:16.8px;font-weight:400;color:#3d3d3d;transform:scaleX(1.0288);">10101020</span>
<span class="t" id="t53" style="left:595px;padding-left:0.48px;top:423.11px;font-size:16.8px;font-weight:400;color:#3d3d3d;transform:scaleX(0.9694);">Operations (AU)</span>
<span class="t" id="t54" style="left:753px;padding-left:0.38px;top:423.11px;font-size:16.8px;font-weight:400;color:#3d3d3d;transform:scaleX(0.9691);">C1010-AU Cost Centers</span>
<span class="t" id="t55" style="left:1005px;padding-left:0.19px;top:423.11px;font-size:16.8px;font-weight:400;color:#3d3d3d;transform:scaleX(0.9394);">1010 - Sydney</span>
<span class="t" id="t56" style="left:1202px;padding-left:0.48px;top:423.11px;font-size:16.8px;font-weight:400;color:#939ea8;transform:scaleX(0.9763);">P1010 - Australia</span>
<svg class="b" style="left:1467.4px;top:438.5px;" width="1.8" height="2.4" viewBox="0 0 2 3" fill="none"><path d="M0 3 2 0V3Z" fill="#777"/></svg>
<span class="t" id="t57" style="left:402px;padding-left:0.54px;top:475.91px;font-size:16.8px;font-weight:400;color:#2b2b2b;-webkit-text-stroke:0.55px #2b2b2b;">6</span>
<span class="t" id="t58" style="left:446px;padding-left:0.11px;top:475.91px;font-size:16.8px;font-weight:400;color:#3d3d3d;transform:scaleX(1.0288);">10101030</span>
<span class="t" id="t59" style="left:595px;padding-left:0.37px;top:475.91px;font-size:16.8px;font-weight:400;color:#3d3d3d;transform:scaleX(0.9011);">Sales (AU)</span>
<span class="t" id="t60" style="left:753px;padding-left:0.38px;top:475.91px;font-size:16.8px;font-weight:400;color:#3d3d3d;transform:scaleX(0.9691);">C1010-AU Cost Centers</span>
<span class="t" id="t61" style="left:1005px;padding-left:0.19px;top:475.91px;font-size:16.8px;font-weight:400;color:#3d3d3d;transform:scaleX(0.9394);">1010 - Sydney</span>
<span class="t" id="t62" style="left:1202px;padding-left:0.48px;top:475.91px;font-size:16.8px;font-weight:400;color:#939ea8;transform:scaleX(0.9763);">P1010 - Australia</span>
<svg class="b" style="left:1467.4px;top:491.29999999999995px;" width="1.8" height="2.4" viewBox="0 0 2 3" fill="none"><path d="M0 3 2 0V3Z" fill="#777"/></svg>
<span class="t" id="t63" style="left:402px;padding-left:0.66px;top:528.71px;font-size:16.8px;font-weight:400;color:#2b2b2b;-webkit-text-stroke:0.55px #2b2b2b;">7</span>
<span class="t" id="t64" style="left:446px;padding-left:0.11px;top:528.71px;font-size:16.8px;font-weight:400;color:#3d3d3d;transform:scaleX(1.0288);">10101040</span>
<span class="t" id="t65" style="left:594px;padding-left:0.84px;top:528.71px;font-size:16.8px;font-weight:400;color:#3d3d3d;transform:scaleX(0.9889);">Marketing (AU)</span>
<span class="t" id="t66" style="left:753px;padding-left:0.38px;top:528.71px;font-size:16.8px;font-weight:400;color:#3d3d3d;transform:scaleX(0.9691);">C1010-AU Cost Centers</span>
<span class="t" id="t67" style="left:1005px;padding-left:0.19px;top:528.71px;font-size:16.8px;font-weight:400;color:#3d3d3d;transform:scaleX(0.9394);">1010 - Sydney</span>
<span class="t" id="t68" style="left:1202px;padding-left:0.48px;top:528.71px;font-size:16.8px;font-weight:400;color:#939ea8;transform:scaleX(0.9763);">P1010 - Australia</span>
<svg class="b" style="left:1467.4px;top:544.0999999999999px;" width="1.8" height="2.4" viewBox="0 0 2 3" fill="none"><path d="M0 3 2 0V3Z" fill="#777"/></svg>
<span class="t" id="t69" style="left:402px;padding-left:0.58px;top:581.51px;font-size:16.8px;font-weight:400;color:#2b2b2b;-webkit-text-stroke:0.55px #2b2b2b;">8</span>
<span class="t" id="t70" style="left:446px;padding-left:0.49px;top:581.51px;font-size:16.8px;font-weight:400;color:#3d3d3d;transform:scaleX(1.0069);">C1030</span>
<span class="t" id="t71" style="left:594px;padding-left:0.84px;top:581.51px;font-size:16.8px;font-weight:400;color:#3d3d3d;transform:scaleX(0.9683);">UK Cost Centers</span>
<span class="t" id="t72" style="left:753px;padding-left:0.34px;top:581.51px;font-size:16.8px;font-weight:400;color:#3d3d3d;transform:scaleX(0.9746);">C000-All Cost Centers</span>
<span class="t" id="t73" style="left:1005px;padding-left:0.07px;top:581.51px;font-size:16.8px;font-weight:400;color:#3d3d3d;transform:scaleX(0.9629);">1030 - London</span>
<svg class="b" style="left:1467.4px;top:596.9px;" width="1.8" height="2.4" viewBox="0 0 2 3" fill="none"><path d="M0 3 2 0V3Z" fill="#777"/></svg>
<span class="t" id="t74" style="left:402px;padding-left:0.48px;top:634.31px;font-size:16.8px;font-weight:400;color:#2b2b2b;-webkit-text-stroke:0.55px #2b2b2b;">9</span>
<span class="t" id="t75" style="left:446px;padding-left:0.11px;top:634.31px;font-size:16.8px;font-weight:400;color:#3d3d3d;transform:scaleX(1.0288);">10301010</span>
<span class="t" id="t76" style="left:595px;padding-left:0.28px;top:634.31px;font-size:16.8px;font-weight:400;color:#3d3d3d;transform:scaleX(0.9354);">Services (UK)</span>
<span class="t" id="t77" style="left:753px;padding-left:0.34px;top:634.31px;font-size:16.8px;font-weight:400;color:#3d3d3d;transform:scaleX(0.9743);">C1030-UK Cost Centers</span>
<span class="t" id="t78" style="left:1005px;padding-left:0.07px;top:634.31px;font-size:16.8px;font-weight:400;color:#3d3d3d;transform:scaleX(0.9629);">1030 - London</span>
<span class="t" id="t79" style="left:1202px;padding-left:0.44px;top:634.31px;font-size:16.8px;font-weight:400;color:#939ea8;transform:scaleX(0.9785);">P1030 - United Kingdom</span>
<svg class="b" style="left:1467.4px;top:649.6999999999999px;" width="1.8" height="2.4" viewBox="0 0 2 3" fill="none"><path d="M0 3 2 0V3Z" fill="#777"/></svg>
<span class="t" id="t80" style="left:397px;padding-left:0.53px;top:687.11px;font-size:16.8px;font-weight:400;color:#2b2b2b;-webkit-text-stroke:0.55px #2b2b2b;">10</span>
<span class="t" id="t81" style="left:446px;padding-left:0.11px;top:687.11px;font-size:16.8px;font-weight:400;color:#3d3d3d;transform:scaleX(1.0288);">10301020</span>
<span class="t" id="t82" style="left:595px;padding-left:0.44px;top:687.11px;font-size:16.8px;font-weight:400;color:#3d3d3d;transform:scaleX(0.9734);">Operations (UK)</span>
<span class="t" id="t83" style="left:753px;padding-left:0.34px;top:687.11px;font-size:16.8px;font-weight:400;color:#3d3d3d;transform:scaleX(0.9743);">C1030-UK Cost Centers</span>
<span class="t" id="t84" style="left:1005px;padding-left:0.07px;top:687.11px;font-size:16.8px;font-weight:400;color:#3d3d3d;transform:scaleX(0.9629);">1030 - London</span>
<span class="t" id="t85" style="left:1202px;padding-left:0.44px;top:687.11px;font-size:16.8px;font-weight:400;color:#939ea8;transform:scaleX(0.9785);">P1030 - United Kingdom</span>
<svg class="b" style="left:1467.4px;top:702.5px;" width="1.8" height="2.4" viewBox="0 0 2 3" fill="none"><path d="M0 3 2 0V3Z" fill="#777"/></svg>
<span class="t" id="t86" style="left:398px;padding-left:0.26px;top:739.91px;font-size:16.8px;font-weight:400;color:#2b2b2b;-webkit-text-stroke:0.55px #2b2b2b;">11</span>
<span class="t" id="t87" style="left:446px;padding-left:0.11px;top:739.91px;font-size:16.8px;font-weight:400;color:#3d3d3d;transform:scaleX(1.0288);">10301030</span>
<span class="t" id="t88" style="left:595px;padding-left:0.37px;top:739.91px;font-size:16.8px;font-weight:400;color:#3d3d3d;transform:scaleX(0.9039);">Sales (UK)</span>
<span class="t" id="t89" style="left:753px;padding-left:0.34px;top:739.91px;font-size:16.8px;font-weight:400;color:#3d3d3d;transform:scaleX(0.9743);">C1030-UK Cost Centers</span>
<span class="t" id="t90" style="left:1005px;padding-left:0.07px;top:739.91px;font-size:16.8px;font-weight:400;color:#3d3d3d;transform:scaleX(0.9629);">1030 - London</span>
<span class="t" id="t91" style="left:1202px;padding-left:0.44px;top:739.91px;font-size:16.8px;font-weight:400;color:#939ea8;transform:scaleX(0.9785);">P1030 - United Kingdom</span>
<svg class="b" style="left:1467.4px;top:755.3px;" width="1.8" height="2.4" viewBox="0 0 2 3" fill="none"><path d="M0 3 2 0V3Z" fill="#777"/></svg>
<span class="t" id="t92" style="left:397px;padding-left:0.68px;top:792.71px;font-size:16.8px;font-weight:400;color:#2b2b2b;-webkit-text-stroke:0.55px #2b2b2b;">12</span>
<span class="t" id="t93" style="left:446px;padding-left:0.11px;top:792.71px;font-size:16.8px;font-weight:400;color:#3d3d3d;transform:scaleX(1.0288);">10301040</span>
<span class="t" id="t94" style="left:594px;padding-left:0.81px;top:792.71px;font-size:16.8px;font-weight:400;color:#3d3d3d;transform:scaleX(0.9933);">Marketing (UK)</span>
<span class="t" id="t95" style="left:753px;padding-left:0.34px;top:792.71px;font-size:16.8px;font-weight:400;color:#3d3d3d;transform:scaleX(0.9743);">C1030-UK Cost Centers</span>
<span class="t" id="t96" style="left:1005px;padding-left:0.07px;top:792.71px;font-size:16.8px;font-weight:400;color:#3d3d3d;transform:scaleX(0.9629);">1030 - London</span>
<span class="t" id="t97" style="left:1202px;padding-left:0.44px;top:792.71px;font-size:16.8px;font-weight:400;color:#939ea8;transform:scaleX(0.9785);">P1030 - United Kingdom</span>
<svg class="b" style="left:1467.4px;top:808.0999999999999px;" width="1.8" height="2.4" viewBox="0 0 2 3" fill="none"><path d="M0 3 2 0V3Z" fill="#777"/></svg>
<span class="t" id="t98" style="left:397px;padding-left:0.65px;top:845.51px;font-size:16.8px;font-weight:400;color:#2b2b2b;-webkit-text-stroke:0.55px #2b2b2b;">13</span>
<span class="t" id="t99" style="left:446px;padding-left:0.48px;top:845.51px;font-size:16.8px;font-weight:400;color:#3d3d3d;transform:scaleX(1.0128);">C1040</span>
<span class="t" id="t100" style="left:595px;padding-left:0.41px;top:845.51px;font-size:16.8px;font-weight:400;color:#3d3d3d;transform:scaleX(0.9556);">CN Cost Centers</span>
<span class="t" id="t101" style="left:753px;padding-left:0.34px;top:845.51px;font-size:16.8px;font-weight:400;color:#3d3d3d;transform:scaleX(0.9746);">C000-All Cost Centers</span>
<span class="t" id="t102" style="left:1005px;padding-left:0.05px;top:845.51px;font-size:16.8px;font-weight:400;color:#3d3d3d;transform:scaleX(0.9765);">1040 - Beijing</span>
<svg class="b" style="left:1467.4px;top:860.8999999999999px;" width="1.8" height="2.4" viewBox="0 0 2 3" fill="none"><path d="M0 3 2 0V3Z" fill="#777"/></svg>
<span class="t" id="t103" style="left:397px;padding-left:0.37px;top:898.31px;font-size:16.8px;font-weight:400;color:#2b2b2b;-webkit-text-stroke:0.55px #2b2b2b;">14</span>
<span class="t" id="t104" style="left:446px;padding-left:0.11px;top:898.31px;font-size:16.8px;font-weight:400;color:#3d3d3d;transform:scaleX(1.0288);">10401010</span>
<span class="t" id="t105" style="left:595px;padding-left:0.29px;top:898.31px;font-size:16.8px;font-weight:400;color:#3d3d3d;transform:scaleX(0.9262);">Services (CN)</span>
<span class="t" id="t106" style="left:753px;padding-left:0.34px;top:898.31px;font-size:16.8px;font-weight:400;color:#3d3d3d;transform:scaleX(0.9735);">C1040-CN Cost Centers</span>
<span class="t" id="t107" style="left:1005px;padding-left:0.05px;top:898.31px;font-size:16.8px;font-weight:400;color:#3d3d3d;transform:scaleX(0.9765);">1040 - Beijing</span>
<span class="t" id="t108" style="left:1202px;padding-left:0.41px;top:898.31px;font-size:16.8px;font-weight:400;color:#939ea8;transform:scaleX(0.9566);">P1040 - China</span>
<svg class="b" style="left:1467.4px;top:913.6999999999999px;" width="1.8" height="2.4" viewBox="0 0 2 3" fill="none"><path d="M0 3 2 0V3Z" fill="#777"/></svg>
<span class="t" id="t109" style="left:397px;padding-left:0.54px;top:951.11px;font-size:16.8px;font-weight:400;color:#2b2b2b;-webkit-text-stroke:0.55px #2b2b2b;">15</span>
<span class="t" id="t110" style="left:446px;padding-left:0.11px;top:951.11px;font-size:16.8px;font-weight:400;color:#3d3d3d;transform:scaleX(1.0288);">10401020</span>
<span class="t" id="t111" style="left:595px;padding-left:0.48px;top:951.11px;font-size:16.8px;font-weight:400;color:#3d3d3d;transform:scaleX(0.9665);">Operations (CN)</span>
<span class="t" id="t112" style="left:753px;padding-left:0.34px;top:951.11px;font-size:16.8px;font-weight:400;color:#3d3d3d;transform:scaleX(0.9735);">C1040-CN Cost Centers</span>
<span class="t" id="t113" style="left:1005px;padding-left:0.05px;top:951.11px;font-size:16.8px;font-weight:400;color:#3d3d3d;transform:scaleX(0.9765);">1040 - Beijing</span>
<span class="t" id="t114" style="left:1202px;padding-left:0.41px;top:951.11px;font-size:16.8px;font-weight:400;color:#939ea8;transform:scaleX(0.9566);">P1040 - China</span>
<svg class="b" style="left:1467.4px;top:966.4999999999999px;" width="1.8" height="2.4" viewBox="0 0 2 3" fill="none"><path d="M0 3 2 0V3Z" fill="#777"/></svg>
<span class="t" id="t115" style="left:397px;padding-left:0.65px;top:1003.91px;font-size:16.8px;font-weight:400;color:#2b2b2b;-webkit-text-stroke:0.55px #2b2b2b;">16</span>
<span class="t" id="t116" style="left:446px;padding-left:0.11px;top:1003.91px;font-size:16.8px;font-weight:400;color:#3d3d3d;transform:scaleX(1.0288);">10401030</span>
<span class="t" id="t117" style="left:595px;padding-left:0.38px;top:1003.91px;font-size:16.8px;font-weight:400;color:#3d3d3d;transform:scaleX(0.8974);">Sales (CN)</span>
<span class="t" id="t118" style="left:753px;padding-left:0.34px;top:1003.91px;font-size:16.8px;font-weight:400;color:#3d3d3d;transform:scaleX(0.9735);">C1040-CN Cost Centers</span>
<span class="t" id="t119" style="left:1005px;padding-left:0.05px;top:1003.91px;font-size:16.8px;font-weight:400;color:#3d3d3d;transform:scaleX(0.9765);">1040 - Beijing</span>
<span class="t" id="t120" style="left:1202px;padding-left:0.41px;top:1003.91px;font-size:16.8px;font-weight:400;color:#939ea8;transform:scaleX(0.9566);">P1040 - China</span>
<svg class="b" style="left:1467.4px;top:1019.3px;" width="1.8" height="2.4" viewBox="0 0 2 3" fill="none"><path d="M0 3 2 0V3Z" fill="#777"/></svg>
<span class="t" id="t121" style="left:397px;padding-left:0.68px;top:1056.71px;font-size:16.8px;font-weight:400;color:#2b2b2b;-webkit-text-stroke:0.55px #2b2b2b;">17</span>
<span class="t" id="t122" style="left:446px;padding-left:0.11px;top:1056.71px;font-size:16.8px;font-weight:400;color:#3d3d3d;transform:scaleX(1.0288);">10401040</span>
<span class="t" id="t123" style="left:594px;padding-left:0.85px;top:1056.71px;font-size:16.8px;font-weight:400;color:#3d3d3d;transform:scaleX(0.9836);">Marketing (CN)</span>
<span class="t" id="t124" style="left:753px;padding-left:0.34px;top:1056.71px;font-size:16.8px;font-weight:400;color:#3d3d3d;transform:scaleX(0.9735);">C1040-CN Cost Centers</span>
<span class="t" id="t125" style="left:1005px;padding-left:0.05px;top:1056.71px;font-size:16.8px;font-weight:400;color:#3d3d3d;transform:scaleX(0.9765);">1040 - Beijing</span>
<span class="t" id="t126" style="left:1202px;padding-left:0.41px;top:1056.71px;font-size:16.8px;font-weight:400;color:#939ea8;transform:scaleX(0.9566);">P1040 - China</span>
<svg class="b" style="left:1467.4px;top:1072.1000000000001px;" width="1.8" height="2.4" viewBox="0 0 2 3" fill="none"><path d="M0 3 2 0V3Z" fill="#777"/></svg>
<div class="b" style="left:374px;top:1099px;width:1100px;height:7px;background:#a9bfcf;border-radius:4px;"></div></main>
<aside aria-label="Property Detail"><div class="b" style="left:1905.6px;top:145px;width:6.5px;height:11px;background:#a3b9ca;border-top-right-radius:5px;"></div>
<div class="b" style="left:1469.5px;top:145px;width:442.9px;height:970px;background:#fff;border-radius:13px;box-shadow:-3px 0 12px rgba(80,110,140,.2);"></div>
<svg class="b" style="left:1487.8px;top:163.2px;" width="9.4" height="16" viewBox="0 0 9.4 16" fill="none"><path d="M.8 .8 8.4 8 .8 15.2" stroke="#3a556f" stroke-width="1.5" stroke-linecap="round" stroke-linejoin="round"/></svg>
<span class="t" id="t127" style="left:1509px;padding-left:0.91px;top:161.17px;font-size:19.2px;font-weight:400;color:#2d4560;transform:scaleX(1.0475);-webkit-text-stroke:0.63px #2d4560;">Property Detail</span>
<span class="t" id="t128" style="left:1485px;padding-left:0.33px;top:223.21px;font-size:16.8px;font-weight:400;color:#5c7389;transform:scaleX(0.9836);">Property Name</span>
<div class="b" style="left:1486px;top:247px;width:409px;height:39.6px;background:#f0f7fd;border-radius:5px;"></div>
<span class="t" id="t129" style="left:1500px;padding-left:0.52px;top:257.11px;font-size:16.8px;font-weight:400;color:#405b76;transform:scaleX(0.9363);-webkit-text-stroke:0.45px #405b76;">PROFITCENTER</span>
<span class="t" id="t130" style="left:1485px;padding-left:0.34px;top:304.01px;font-size:16.8px;font-weight:400;color:#5c7389;transform:scaleX(0.9774);">Property Desc</span>
<div class="b" style="left:1486px;top:328px;width:409px;height:40.4px;background:#e8f0f8;border-radius:5px;"></div>
<span class="t" id="t131" style="left:1500px;padding-left:0.30px;top:336.90px;font-size:17.6px;font-weight:400;color:#2b2b2b;transform:scaleX(1.0274);-webkit-text-stroke:0.58px #2b2b2b;">Profitcenter</span>
<span class="t" id="t132" style="left:1485px;padding-left:0.46px;top:385.01px;font-size:16.8px;font-weight:400;color:#5c7389;transform:scaleX(0.9866);">Property Type</span>
<div class="b" style="left:1486px;top:413.6px;width:409px;height:37.8px;background:#e8f0f8;border-radius:6px;"></div>
<span class="t" id="t133" style="left:1495px;padding-left:0.94px;top:422.01px;font-size:16.8px;font-weight:400;color:#36526d;transform:scaleX(1.0068);-webkit-text-stroke:0.55px #36526d;">Link to another record</span>
<svg class="b" style="left:1868.7px;top:426.1px;" width="17.4" height="9.8" viewBox="0 0 17.4 9.8" fill="none"><path d="M.9 .9 8.7 8.6 16.5 .9" stroke="#2f4a66" stroke-width="2" stroke-linecap="round" stroke-linejoin="round"/></svg>
<div class="b" style="left:1486px;top:464.2px;width:409px;height:161.8px;background:#e8f0f8;border-radius:7px;"></div>
<span class="t" id="t134" style="left:1567px;padding-left:0.90px;top:478.64px;font-size:18px;font-weight:400;color:#3d3d3d;transform:scaleX(0.9732);">Find a table to link records from</span>
<div class="b" style="left:1502px;top:545.6px;width:376.8px;height:38px;background:#fff;border-radius:6px;"></div>
<span class="t" id="t135" style="left:1512px;padding-left:0.42px;top:553.21px;font-size:16.8px;font-weight:400;color:#2b2b2b;transform:scaleX(1.0509);-webkit-text-stroke:0.55px #2b2b2b;">Profitcenter</span>
<svg class="b" style="left:1852.3px;top:558.8px;" width="17.2" height="9" viewBox="0 0 17.2 9" fill="none"><path d="M.8 .8 8.6 8 16.4 .8" stroke="#2f4a66" stroke-width="1.4" stroke-linecap="round" stroke-linejoin="round"/></svg>
<span class="t" id="t136" style="left:1500px;padding-left:1.16px;top:1071.61px;font-size:16.8px;font-weight:400;color:#00a8bc;transform:scaleX(0.8351);-webkit-text-stroke:0.5px #00a8bc;">DELETE</span>
<div class="b" style="left:1578px;top:1067px;width:138.8px;height:32.3px;background:#fff;border:2px solid #00a8bc;border-radius:5px;"></div>
<span class="t" id="t137" style="left:1617px;padding-left:0.15px;top:1070.61px;font-size:16.8px;font-weight:400;color:#00a8bc;transform:scaleX(0.8728);-webkit-text-stroke:0.5px #00a8bc;">CANCEL</span>
<div class="b" style="left:1741px;top:1067px;width:139px;height:32.3px;background:#00a8bc;border-radius:5px;"></div>
<span class="t" id="t138" style="left:1790px;padding-left:1.11px;top:1071.61px;font-size:16.8px;font-weight:400;color:#fff;transform:scaleX(0.8597);-webkit-text-stroke:0.5px #fff;">SAVE</span></aside>
</div>
<svg class="b" style="left:0px;top:0px;" width="30" height="36" viewBox="0 0 30 36" fill="none"><path d="M7.8 8.3V29.7L13.5 25 17.2 32.8 20.3 30.9 16.6 23.4 25 23.1Z" fill="#fff" stroke="#2a2a2a" stroke-width="1" stroke-linejoin="round"/></svg>
</body></html>
